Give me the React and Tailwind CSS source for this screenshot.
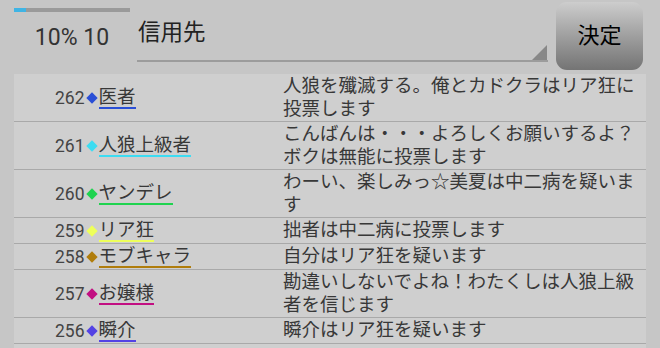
import { useState } from "react";

const rows = [
  { no: 262, name: "医者", color: "#2a4fd6", msg: "人狼を殲滅する。俺とカドクラはリア狂に投票します" },
  { no: 261, name: "人狼上級者", color: "#3ddcf2", msg: "こんばんは・・・よろしくお願いするよ？ボクは無能に投票します" },
  { no: 260, name: "ヤンデレ", color: "#1fd34f", msg: "わーい、楽しみっ☆美夏は中二病を疑います" },
  { no: 259, name: "リア狂", color: "#eeff5a", msg: "拙者は中二病に投票します" },
  { no: 258, name: "モブキャラ", color: "#b07d0c", msg: "自分はリア狂を疑います" },
  { no: 257, name: "お嬢様", color: "#c20f82", msg: "勘違いしないでよね！わたくしは人狼上級者を信じます" },
  { no: 256, name: "瞬介", color: "#5443e4", msg: "瞬介はリア狂を疑います" },
];

const Row = ({ row }) => (
  <div className="flex border-b border-[#a9a9a9]">
    <div className="w-[269px] shrink-0 pl-[41px] flex items-center min-h-[25px]">
      <span className="text-[17.5px] leading-[20px] text-[#444]">{row.no}</span>
      <span
        className="w-[8px] h-[8px] rotate-45 mx-[3px]"
        style={{ backgroundColor: row.color }}
      />
      <span
        className="text-[18.5px] leading-[20px] text-[#383838] border-b-2"
        style={{ borderColor: row.color }}
      >
        {row.name}
      </span>
    </div>
    <div className="w-[356px] py-[0.5px] text-[18.5px] leading-[23px] text-[#383838]">
      {row.msg}
    </div>
  </div>
);

export default function App() {
  const [progress] = useState(10);

  return (
    <div
      className="w-[660px] h-[348px] overflow-hidden bg-[#c6c6c6] flex flex-col"
      style={{ fontFamily: "Roboto, 'Noto Sans CJK JP', sans-serif" }}
    >
      <div className="h-[74px] shrink-0 flex">
        <div className="w-[116px] ml-[14px] flex flex-col">
          <div className="mt-[8px] h-[4px] bg-[#9a9a9a] flex">
            <div className="bg-[#3fb4e4]" style={{ width: `${progress}%` }} />
          </div>
          <div className="mt-[12px] text-center text-[23px] leading-[28px] text-[#333]">
            {progress}% 10
          </div>
        </div>
        <div className="ml-[7px] w-[411px] h-[62px] relative border-b-2 border-[#9c9c9c]">
          <div className="pt-[18px] pl-[1px] text-[22.5px] leading-[28px] text-[#222]">信用先</div>
          <div className="absolute right-[1px] bottom-0 w-0 h-0 border-l-[15px] border-l-transparent border-b-[15px] border-b-[#888]" />
        </div>
        <button className="ml-[8px] mt-[2px] w-[87px] h-[68px] rounded-[11px] bg-gradient-to-b from-[#cdcdcd] to-[#747474] text-[22px] text-black flex items-center justify-center pb-[2px]">
          決定
        </button>
      </div>
      <div className="mx-[14px] flex-1 bg-[#cfcfcf]">
        {rows.map((row) => (
          <Row key={row.no} row={row} />
        ))}
      </div>
    </div>
  );
}
